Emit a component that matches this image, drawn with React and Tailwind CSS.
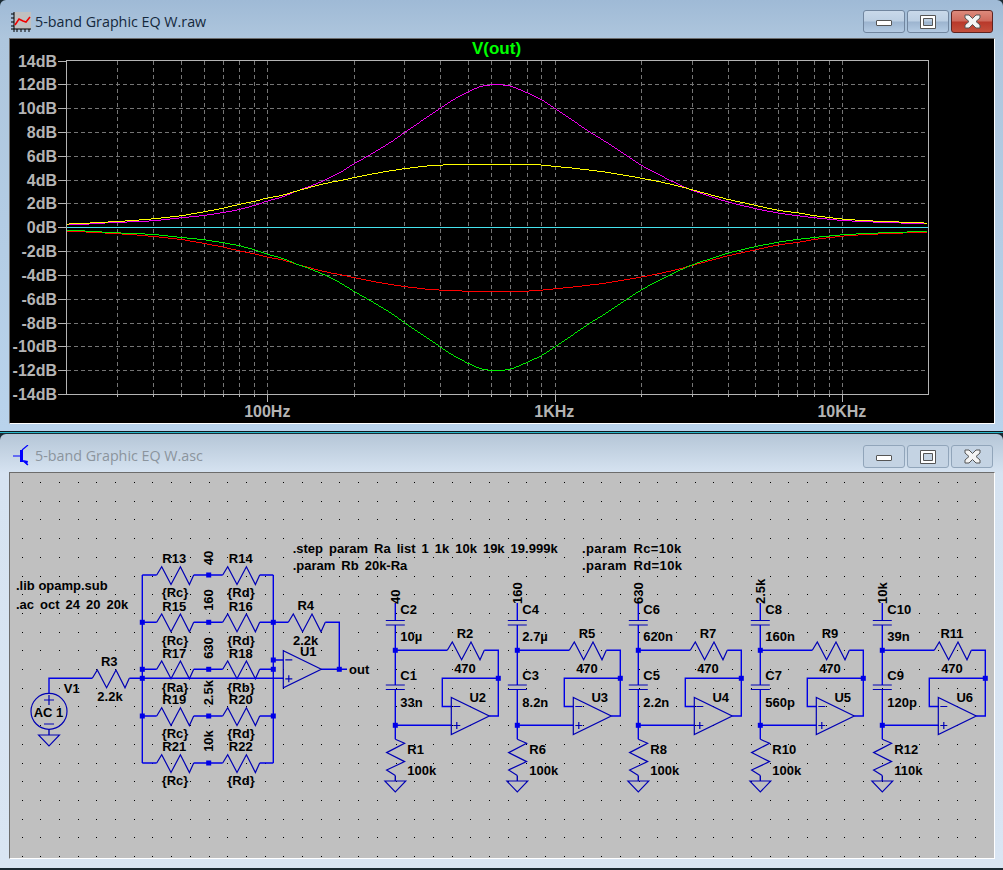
import React from 'react'

const BLUE = '#0000e6'
const NAVY = '#0000b4'

// measured off the plot, page pixels: [x, y]
const MAGENTA = [[66,224.3],[86,223.7],[111.7,222],[132.7,221.3],[152.7,220.3],[180.7,217.3],[203.3,215],[222.7,212],[239.3,209],[254.7,204.7],[267.3,200.3],[281.7,196.7],[296.7,190.3],[310,185.7],[326.7,178.7],[343.3,170],[350,165.3],[370,154],[390,142],[405,131.3],[421.7,120],[440,107.7],[450,100.7],[466.7,91.7],[480,85.7],[495,83.7],[510,85.3],[526.7,92.3],[541.7,99.3],[554.3,107.7],[570,118.3],[588.3,131],[603.3,140],[623.3,153.3],[640,164.5],[656.7,173.3],[673.3,181.7],[691.7,190],[710,196],[727.7,201.7],[755.7,208.3],[778.3,212.7],[797.3,215.3],[814.3,217.3],[828.3,218.7],[842.3,220],[866.7,221.3],[893.3,222.3],[927,223.3]]
const YELLOW = [[66,223.7],[93.3,222.3],[111.7,221.3],[132.7,220],[152.7,218.3],[180.7,215.3],[203.3,211.3],[222.7,207.7],[239.3,203.7],[254.7,200.7],[267.3,197.3],[281.7,195],[296.7,190.3],[310,186.7],[326.7,182.5],[343.3,179.3],[370,173.7],[390,170.3],[405,168],[428,165.3],[456.7,163.7],[533.3,163.7],[548.3,165.3],[573.3,167.7],[603.3,171.3],[630,175.7],[656.7,180.7],[673.3,184.3],[691.7,189.3],[710,194.3],[727.7,199],[755.7,205],[778.3,210],[797.3,212.3],[814.3,215.3],[828.3,217],[842.3,218.7],[866.7,220.3],[893.3,221.3],[927,222.7]]

const mirror = (pts) => pts.map(([x, y]) => [x, 454.2 - y])

// one point per pixel column, so the trace steps the way the scope window draws it
const trace = (pts) => {
  let xs = []
  let ys = []
  for (let i = 0; i < pts.length - 1; i++) {
    const [x0, y0] = pts[i]
    const [x1, y1] = pts[i + 1]
    for (let x = Math.ceil(x0); x < x1; x++) {
      xs.push(x)
      ys.push(y0 + ((y1 - y0) * (x - x0)) / (x1 - x0))
    }
  }
  // the table is hand read, take the kinks out of it
  return xs
    .map((x, i) => {
      const part = ys.slice(Math.max(0, i - 5), i + 6)
      const y = part.reduce((a, b) => a + b, 0) / part.length
      return `${x + 0.5},${Math.round(y) + 0.5}`
    })
    .join(' ')
}

const xOf = (f) => 267.3 + 287.3 * (Math.log10(f) - 2)
const FREQS = [30,40,50,60,70,80,90,100,200,300,400,500,600,700,800,900,1000,2000,3000,4000,5000,6000,7000,8000,9000,10000]
const DB = [14,12,10,8,6,4,2,0,-2,-4,-6,-8,-10,-12,-14]
const yOf = (i) => Math.round(60.5 + 23.82 * i) + 0.5

const Plot = () => (
  <svg viewBox="10 39 984 384" className="block w-[984px] h-[384px] font-['Liberation_Sans',Arial,sans-serif]">
    <text x="496.5" y="53.5" textAnchor="middle" className="fill-[#00ff00] font-bold text-[17px]">V(out)</text>

    {DB.map((d, i) => (
      <g key={d}>
        <text x="57" y={yOf(i) + 5} textAnchor="end" className="fill-[#b4b4b4] font-bold text-[16px]">{d}dB</text>
        <line x1="58" x2="66" y1={yOf(i)} y2={yOf(i)} stroke="#b4b4b4" shapeRendering="crispEdges" />
        {d !== 0 && i > 0 && i < 14 && (
          <line x1="67" x2="928" y1={yOf(i)} y2={yOf(i)} stroke="#757575" strokeDasharray="4 3" shapeRendering="crispEdges" />
        )}
      </g>
    ))}

    {FREQS.map((f) => {
      const x = Math.round(xOf(f)) + 0.5
      const major = f === 100 || f === 1000 || f === 10000
      return (
        <g key={f}>
          <line x1={x} x2={x} y1="61" y2="394" stroke="#757575" strokeDasharray="4 3" shapeRendering="crispEdges" />
          <line x1={x} x2={x} y1="394" y2={major ? 402 : 397} stroke="#b4b4b4" shapeRendering="crispEdges" />
        </g>
      )
    })}

    <rect x="66.5" y="60.5" width="861.5" height="333.5" fill="none" stroke="#b4b4b4" shapeRendering="crispEdges" />

    <text x="267.3" y="417" textAnchor="middle" className="fill-[#b4b4b4] font-bold text-[16px]">100Hz</text>
    <text x="554.3" y="417" textAnchor="middle" className="fill-[#b4b4b4] font-bold text-[16px]">1KHz</text>
    <text x="841.9" y="417" textAnchor="middle" className="fill-[#b4b4b4] font-bold text-[16px]">10KHz</text>

    <line x1="67" x2="928" y1="227.5" y2="227.5" stroke="#45e3ee" shapeRendering="crispEdges" />
    <polyline points={trace(mirror(YELLOW))} fill="none" stroke="#ff0000" strokeWidth="1.3" shapeRendering="crispEdges" />
    <polyline points={trace(mirror(MAGENTA))} fill="none" stroke="#00ee00" shapeRendering="crispEdges" />
    <polyline points={trace(MAGENTA)} fill="none" stroke="#ee00ee" shapeRendering="crispEdges" />
    <polyline points={trace(YELLOW)} fill="none" stroke="#ffff00" strokeWidth="1.3" shapeRendering="crispEdges" />
  </svg>
)

const Wire = ({ d, color = BLUE }) => <path d={d} fill="none" stroke={color} strokeWidth="1.4" />

const Dot = ({ x, y }) => <rect x={x - 2.5} y={y - 2.5} width="5" height="5" fill={BLUE} />

const HRes = ({ x, y }) => (
  <polyline
    points={`${x},${y} ${x + 5},${y - 8.3} ${x + 14.3},${y + 9.5} ${x + 23.7},${y - 8.3} ${x + 32.7},${y + 9.5} ${x + 37},${y}`}
    fill="none"
    stroke={NAVY}
    strokeWidth="1.2"
  />
)

const VRes = ({ x, y }) => (
  <polyline
    points={`${x},${y} ${x + 9.3},${y + 4} ${x - 8.7},${y + 13.3} ${x + 9.3},${y + 22.3} ${x - 8.7},${y + 30.7} ${x},${y + 36.3}`}
    fill="none"
    stroke={NAVY}
    strokeWidth="1.2"
  />
)

const Ground = ({ x, y }) => (
  <polygon points={`${x - 10.5},${y} ${x + 10.5},${y} ${x},${y + 11}`} fill="none" stroke={NAVY} strokeWidth="1.1" />
)

const OpAmp = ({ x, y }) => (
  <g fill="none" stroke={NAVY} strokeWidth="1.2">
    <polygon points={`${x},${y - 18.5} ${x},${y + 18.5} ${x + 38},${y}`} />
    <path d={`M${x + 2} ${y - 9.5}h7M${x + 2} ${y + 9.5}h7M${x + 5.5} ${y + 6}v7`} />
  </g>
)

const Label = ({ x, y, anchor = 'middle', extra = '', children }) => (
  <text x={x} y={y + 4.5} textAnchor={anchor} className={`fill-black font-bold text-[13px] ${extra}`}>{children}</text>
)

const Up = ({ x, y, anchor = 'middle', children }) => (
  <text
    x={x + 4.5}
    y={y}
    textAnchor={anchor}
    transform={`rotate(-90 ${x + 4.5} ${y})`}
    className="fill-black font-bold text-[13px]"
  >
    {children}
  </text>
)

const Cap = ({ x, y }) => (
  <path d={`M${x - 9.5} ${y}h19M${x - 9.5} ${y + 4.5}h19`} fill="none" stroke={NAVY} strokeWidth="1.2" />
)

const Stage = ({ dx, tune, c2, c2v, r2, c1, c1v, u, r1, r1v }) => {
  const x = 395.3 + dx
  return (
    <g>
      <Wire d={`M${x} 603V620.5M${x} 625V685M${x} 689.5V739.3`} />
      <Wire d={`M${x} 775.6V781`} color={NAVY} />
      <Cap x={x} y={620.5} />
      <Cap x={x} y={685} />
      <Wire d={`M${x} 650.3H${x + 52}M${x + 89} 650.3H${x + 103}V716H${x + 94}`} />
      <Wire d={`M${x + 103} 678.3H${x + 47}V706.5H${x + 56}`} />
      <Wire d={`M${x} 725.3H${x + 56}`} />
      <HRes x={x + 52} y={650.3} />
      <VRes x={x} y={739.3} />
      <Ground x={x} y={781} />
      <OpAmp x={x + 56} y={716} />
      <Dot x={x} y={650.3} />
      <Dot x={x} y={725.3} />
      <Dot x={x + 103} y={678.3} />
      <Up x={x} y={604} anchor="start">{tune}</Up>
      <Label x={x + 5} y={609} anchor="start">{c2}</Label>
      <Label x={x + 5} y={636.7} anchor="start">{c2v}</Label>
      <Label x={x + 69.7} y={633.3}>{r2}</Label>
      <Label x={x + 69.7} y={668.3}>470</Label>
      <Label x={x + 5} y={675} anchor="start">{c1}</Label>
      <Label x={x + 5} y={702.7} anchor="start">{c1v}</Label>
      <Label x={x + 82.4} y={697.3}>{u}</Label>
      <Label x={x + 12} y={749.3} anchor="start">{r1}</Label>
      <Label x={x + 12} y={770} anchor="start">{r1v}</Label>
    </g>
  )
}

const STAGES = [
  { dx: 0, tune: '40', c2: 'C2', c2v: '10µ', r2: 'R2', c1: 'C1', c1v: '33n', u: 'U2', r1: 'R1', r1v: '100k' },
  { dx: 122, tune: '160', c2: 'C4', c2v: '2.7µ', r2: 'R5', c1: 'C3', c1v: '8.2n', u: 'U3', r1: 'R6', r1v: '100k' },
  { dx: 243, tune: '630', c2: 'C6', c2v: '620n', r2: 'R7', c1: 'C5', c1v: '2.2n', u: 'U4', r1: 'R8', r1v: '100k' },
  { dx: 365, tune: '2.5k', c2: 'C8', c2v: '160n', r2: 'R9', c1: 'C7', c1v: '560p', u: 'U5', r1: 'R10', r1v: '100k' },
  { dx: 487, tune: '10k', c2: 'C10', c2v: '39n', r2: 'R11', c1: 'C9', c1v: '120p', u: 'U6', r1: 'R12', r1v: '110k' },
]

const ROWS = [
  { y: 575, tune: '40', ty: 558, l: 'R13', lv: '{Rc}', r: 'R14', rv: '{Rd}' },
  { y: 622.3, tune: '160', ty: 600, l: 'R15', lv: '{Rc}', r: 'R16', rv: '{Rd}' },
  { y: 669.3, tune: '630', ty: 648, l: 'R17', lv: '{Ra}', r: 'R18', rv: '{Rb}' },
  { y: 716, tune: '2.5k', ty: 692.7, l: 'R19', lv: '{Rc}', r: 'R20', rv: '{Rd}' },
  { y: 763, tune: '10k', ty: 741, l: 'R21', lv: '{Rc}', r: 'R22', rv: '{Rd}' },
]

const Bridge = () => (
  <g>
    <Wire d="M142.3 575V763M273.3 575V763" />
    {ROWS.map((row) => (
      <g key={row.l}>
        <Wire d={`M142.3 ${row.y}H156.7M193.7 ${row.y}H222.7M259.7 ${row.y}H273.3`} />
        <HRes x={156.7} y={row.y} />
        <HRes x={222.7} y={row.y} />
        <Dot x={208.7} y={row.y} />
        <Up x={208.7} y={row.ty}>{row.tune}</Up>
        <Label x={174.3} y={row.y - 16.3}>{row.l}</Label>
        <Label x={175} y={row.y + 17.8}>{row.lv}</Label>
        <Label x={240.7} y={row.y - 16.3}>{row.r}</Label>
        <Label x={241} y={row.y + 17.8}>{row.rv}</Label>
      </g>
    ))}
    <Wire d="M129.3 678.3H283.3M273.3 660H283.3" />
    <Wire d="M273.3 622.3H288.3M325.3 622.3H339.3V669.3M321.3 669.3H347" />
    <Wire d="M49 693V678.3H92.3" />
    <HRes x={92.3} y={678.3} />
    <HRes x={288.3} y={622.3} />
    <OpAmp x={283.3} y={669.3} />
    {[[142.3, 622.3], [142.3, 669.3], [142.3, 678.3], [142.3, 716], [273.3, 622.3], [273.3, 660], [273.3, 669.3], [273.3, 716], [339.3, 669.3]].map(([x, y]) => (
      <Dot key={`${x}-${y}`} x={x} y={y} />
    ))}

    {/* AC source */}
    <circle cx="49" cy="711.3" r="18" fill="none" stroke={NAVY} strokeWidth="1.2" />
    <path d="M44 700h10M49 695v10M44 724h10" fill="none" stroke={NAVY} strokeWidth="1.2" />
    <Wire d="M49 729.3V735" color={NAVY} />
    <Ground x={49} y={735} />

    <Label x={305.7} y={605.7}>R4</Label>
    <Label x={305.7} y={640.7}>2.2k</Label>
    <Label x={308.3} y={651}>U1</Label>
    <Label x={109.3} y={661.7}>R3</Label>
    <Label x={110} y={696.7}>2.2k</Label>
    <Label x={71.7} y={688.3}>V1</Label>
    <Label x={48.5} y={712}>AC 1</Label>
    <Label x={349} y={669} anchor="start">out</Label>
  </g>
)

const dots = []
for (let r = 0; r < 21; r++) {
  for (let c = 0; c < 52; c++) {
    dots.push(
      <rect
        key={`${r}-${c}`}
        x={Math.round(21.5 + 18.7 * c)}
        y={Math.round(482 + 18.7 * r)}
        width="1"
        height="1"
        fill="#000"
        shapeRendering="crispEdges"
      />
    )
  }
}

const Schematic = () => (
  <svg viewBox="10 473 984 385" className="block w-[984px] h-[385px] font-['Liberation_Sans',Arial,sans-serif]">
    {dots}
    <Label x={16} y={585.7} anchor="start">.lib opamp.sub</Label>
    <Label x={16} y={604} anchor="start" extra="[word-spacing:2.4px]">.ac oct 24 20 20k</Label>
    <Label x={292.7} y={548} anchor="start" extra="[word-spacing:2.4px]">.step param Ra list 1 1k 10k 19k 19.999k</Label>
    <Label x={292.7} y={565} anchor="start" extra="[word-spacing:2.4px]">.param Rb 20k-Ra</Label>
    <Label x={582} y={548} anchor="start" extra="tracking-[0.4px] [word-spacing:2.4px]">.param Rc=10k</Label>
    <Label x={582} y={565} anchor="start" extra="tracking-[0.4px] [word-spacing:2.4px]">.param Rd=10k</Label>
    <Bridge />
    {STAGES.map((s) => <Stage key={s.u} {...s} />)}
  </svg>
)

const WaveIcon = () => (
  <svg viewBox="0 0 20 20" className="w-5 h-5 shrink-0">
    <rect x="3" y="0" width="17" height="17" fill="#c0c0c0" />
    <path d="M3 0v20M0 2h3M0 6h3M0 10h3M0 14h3M0 17h20M6 17v3M10 17v3M14 17v3M18 17v3" stroke="#000" fill="none" />
    <path d="M4 13L8 7L12 9L15 10L19 5" stroke="#f00000" strokeWidth="1.6" fill="none" />
  </svg>
)

const TransistorIcon = () => (
  <svg viewBox="0 0 16 21" className="w-4 h-[21px] shrink-0">
    <path d="M0 11h7M9 5L15 0M9 15L15 20" stroke="#0000ff" strokeWidth="1.2" fill="none" />
    <rect x="7" y="5" width="3" height="12" fill="#0000ff" />
    <polygon points="10,15 15,16 14,20" fill="#0000ff" />
  </svg>
)

const WinButton = ({ kind, active }) => {
  const tone =
    kind === 'close' && active
      ? 'border-[#5e2320] bg-[linear-gradient(#dd8a7c_0%,#cf6a5c_48%,#b8382a_52%,#c4503c_100%)]'
      : active
        ? 'border-[#71869f] bg-[linear-gradient(#c9d9ea_0%,#bccfe3_48%,#9cb4cf_52%,#b4cbe3_100%)]'
        : 'border-[#91a5ba] bg-[#c4d3e3]'
  return (
    <div className={`w-[42px] h-[23px] rounded-[3px] border flex items-center justify-center ${tone}`}>
      {kind === 'min' && <div className="w-4 h-[6px] mt-[2px] rounded-[1px] bg-white border border-[#555]" />}
      {kind === 'max' && (
        <svg viewBox="0 0 16 14" className="w-4 h-[14px]">
          <path d="M0.5 0.5h15v13h-15zM3.5 3.5v7h9v-7z" fill="#fff" stroke="#555" fillRule="evenodd" />
        </svg>
      )}
      {kind === 'close' && (
        <svg viewBox="0 0 17 15" className="w-[17px] h-[15px]">
          <path d="M1 1h4l3.5 3.5L12 1h4v3l-4 3.5 4 3.5v3h-4L8.5 10.500 5 14H1v-3l4-3.500L1 4z" fill="#f4f4f4" stroke="#555" strokeLinejoin="round" />
        </svg>
      )}
    </div>
  )
}

const Buttons = ({ active }) => (
  <div className="ml-auto flex gap-[2px]">
    <WinButton kind="min" active={active} />
    <WinButton kind="max" active={active} />
    <WinButton kind="close" active={active} />
  </div>
)

export default function App() {
  return (
    <div className="w-[1003px] h-[870px] overflow-hidden bg-[#1b2a33] font-['Open_Sans',sans-serif]">
      {/* waveform viewer */}
      <div className="h-[431px] rounded-t-[6px] bg-[linear-gradient(#9fbad6_0%,#aec6dd_9%,#b9d3ec_100%)]">
        <div className="h-[38px] pt-[10px] pl-[11px] pr-[10px] flex items-start">
          <div className="mt-[2px]"><WaveIcon /></div>
          <span className="ml-1 mt-[2px] text-[14.3px] leading-5 text-[#14283c]">5-band Graphic EQ W.raw</span>
          <Buttons active />
        </div>
        <div className="ml-[9px] w-[986px] border border-[#6c6c6c] border-b-white border-r-white bg-black">
          <Plot />
        </div>
      </div>
      <div className="h-px bg-[#10181c]" />
      <div className="h-px bg-[#27b7c9]" />
      <div className="h-px bg-[#1b2a33]" />

      {/* schematic editor */}
      <div className="h-[434px] rounded-t-[6px] bg-[linear-gradient(#b5c6d7_0%,#d6e3f1_9%,#d9e5f3_100%)]">
        <div className="h-[38px] pt-[11px] pl-[13px] pr-[10px] flex items-start">
          <TransistorIcon />
          <span className="ml-[6px] mt-[1px] text-[14.3px] leading-5 text-[#8b949d]">5-band Graphic EQ W.asc</span>
          <Buttons />
        </div>
        <div className="ml-[9px] w-[986px] border border-[#6c6c6c] border-b-white border-r-white bg-[#c0c0c0]">
          <Schematic />
        </div>
      </div>
    </div>
  )
}
